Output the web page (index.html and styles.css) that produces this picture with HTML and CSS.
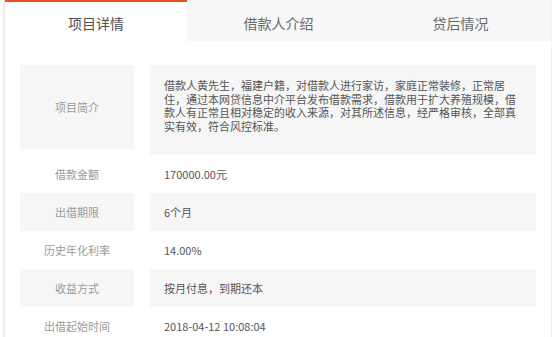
FILE: index.html
```html
<!DOCTYPE html>
<html lang="zh-CN">
<head>
  <meta charset="UTF-8">
  <meta name="viewport" content="width=device-width, initial-scale=1.0">
  <title>项目详情</title>
  <link rel="stylesheet" href="styles.css">
</head>
<body>
  <div class="panel">
    <div class="tabs">
      <div class="tab active">项目详情</div>
      <div class="tab">借款人介绍</div>
      <div class="tab">贷后情况</div>
    </div>

    <div class="details">
      <div class="row intro">
        <div class="label">项目简介</div>
        <div class="value">借款人黄先生，福建户籍，对借款人进行家访，家庭正常装修，正常居住，通过本网贷信息中介平台发布借款需求，借款用于扩大养殖规模，借款人有正常且相对稳定的收入来源，对其所述信息，经严格审核，全部真实有效，符合风控标准。</div>
      </div>
      <div class="row">
        <div class="label">借款金额</div>
        <div class="value">170000.00元</div>
      </div>
      <div class="row shaded">
        <div class="label">出借期限</div>
        <div class="value">6个月</div>
      </div>
      <div class="row">
        <div class="label">历史年化利率</div>
        <div class="value">14.00%</div>
      </div>
      <div class="row shaded">
        <div class="label">收益方式</div>
        <div class="value">按月付息，到期还本</div>
      </div>
      <div class="row">
        <div class="label">出借起始时间</div>
        <div class="value">2018-04-12 10:08:04</div>
      </div>
    </div>
  </div>
</body>
</html>
```

FILE: styles.css
```css
body {
  margin: 0;
  background: #fff;
  font-family: "Noto Sans CJK SC", "Noto Sans", sans-serif;
  overflow: hidden;
}
.panel {
  width: 549px;
  margin-left: 3px;
  border-left: 2px solid #ececec;
  border-right: 1px solid #f2f2f2;
  min-height: 337px;
  box-sizing: border-box;
}
.tabs {
  display: grid;
  grid-template-columns: 182px 183px 1fr;
  height: 41px;
  background: #f7f7f7;
}
.tab {
  display: flex;
  justify-content: center;
  align-items: center;
  padding-top: 4px;
  font-size: 14px;
  color: #6a6a6a;
}
.tab.active {
  background: #fff;
  color: #505050;
  border-top: 2px solid #e8511c;
  padding-top: 2px;
}
.details {
  padding: 24px 14px 0 15px;
}
.row {
  display: grid;
  grid-template-columns: 114px 386px;
  gap: 16px;
  height: 38px;
  font-size: 11px;
}
.row .label {
  display: flex;
  justify-content: center;
  align-items: center;
  color: #9a9a9a;
}
.row .value {
  display: flex;
  align-items: center;
  padding-left: 14px;
  color: #555;
}
.row.shaded .label,
.row.shaded .value {
  background: #f6f6f6;
}
.row.intro {
  height: 90px;
}
.row.intro .label {
  background: #f6f6f6;
  height: 84px;
}
.row.intro .value {
  display: block;
  background: #f6f6f6;
  padding: 14px 17px 0 14px;
  line-height: 13.7px;
}
```
